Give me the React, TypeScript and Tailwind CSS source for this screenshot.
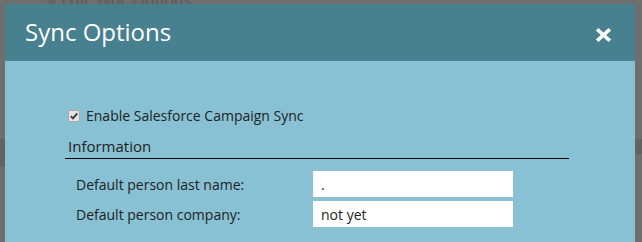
import React from "react";

export default function App() {
  return (
    <div
      className="relative w-[642px] h-[242px] overflow-hidden bg-[#6e6e6e] pt-[4px] pl-[5px]"
      style={{ fontFamily: '"Open Sans", "Noto Sans", sans-serif' }}
    >
      {/* faint page behind the overlay */}
      <div className="absolute left-[44px] top-[-12px] text-[16px] text-[#5a5a5a]">✎ Edit Sync Options</div>
      <div className="absolute left-0 top-[139px] w-[5px] h-[28px] bg-[#636363]" />
      <div className="absolute right-0 top-[139px] w-[7px] h-[15px] bg-[#626262]" />

      <div className="relative w-[630px] h-[260px] bg-[#88c1d3]">
        <div className="flex h-[57px] items-center justify-between bg-[#47808f] pl-[20px] pr-[24px]">
          <div className="text-[24px] leading-none text-white pb-[2px]">Sync Options</div>
          <svg width="15" height="14" viewBox="0 0 15 14" className="mt-[4px]">
            <path d="M2.5 2.5 L12.5 11.5 M12.5 2.5 L2.5 11.5" stroke="#fff" strokeWidth="3.6" strokeLinecap="square" />
          </svg>
        </div>

        <div className="pl-[60px] w-[564px] pt-[48px]">
          <div className="flex items-center gap-[6px] pl-[3px] h-[14px]">
            <div className="flex h-[12px] w-[12px] items-center justify-center rounded-[2px] border border-[#a9a9a9] bg-[#e4e4e4]">
              <svg width="10" height="10" viewBox="0 0 10 10">
                <path d="M1.8 5.2 L4 7.4 L8.3 2.3" fill="none" stroke="#3a3a3a" strokeWidth="1.9" />
              </svg>
            </div>
            <span className="text-[14px] leading-none text-[#222]">Enable Salesforce Campaign Sync</span>
          </div>

          <div className="mt-[14px] border-b border-black pl-[3px] pb-[2px] text-[15px] leading-[19px] text-[#1e1e1e]">
            Information
          </div>

          <div className="mt-[12px] flex flex-col gap-[4px] pl-[11px]">
            <div className="flex items-center">
              <div className="w-[237px] text-[14px] text-[#222]">Default person last name:</div>
              <div className="flex h-[26px] w-[200px] items-center bg-white pl-[8px] text-[14px] text-[#222]">.</div>
            </div>
            <div className="flex items-center">
              <div className="w-[237px] text-[14px] text-[#222]">Default person company:</div>
              <div className="flex h-[26px] w-[200px] items-center bg-white pl-[8px] text-[14px] text-[#222]">not yet</div>
            </div>
          </div>
        </div>
      </div>
    </div>
  );
}
